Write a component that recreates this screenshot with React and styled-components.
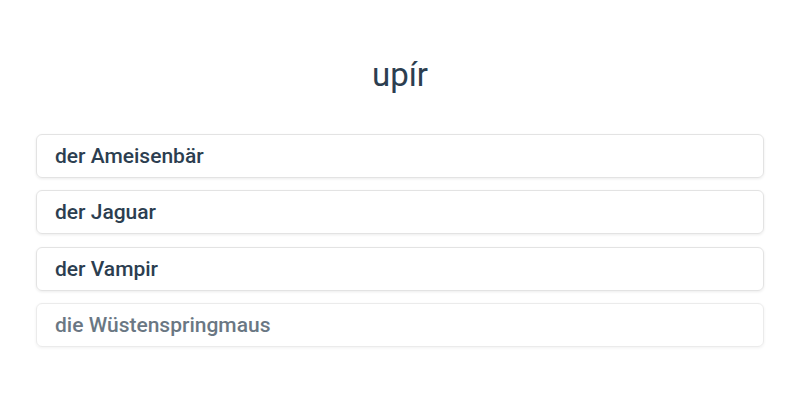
import React from "react";
import { styled, createGlobalStyle } from "styled-components";

const GlobalStyle = createGlobalStyle`
  body {
    margin: 0;
    background: #ffffff;
    font-family: Roboto, "Noto Sans", sans-serif;
    color: #2c3e50;
  }
`;

const options = [
  { id: 1, label: "der Ameisenbär" },
  { id: 2, label: "der Jaguar" },
  { id: 3, label: "der Vampir" },
  { id: 4, label: "die Wüstenspringmaus", faded: true },
];

const App = () => {
  return (
    <Page>
      <GlobalStyle />
      <Word>upír</Word>
      <OptionList>
        {options.map((item) => (
          <OptionCard key={item.id} $faded={item.faded}>
            {item.label}
          </OptionCard>
        ))}
      </OptionList>
    </Page>
  );
};

const Page = styled.div`
  width: 800px;
  height: 400px;
  padding: 52px 36px 0;
  box-sizing: border-box;
`;

const Word = styled.h1`
  margin: 0 0 36px;
  text-align: center;
  font-size: 33px;
  font-weight: 400;
  line-height: 46px;
`;

const OptionList = styled.div`
  display: flex;
  flex-direction: column;
  gap: 12.4px;
`;

const OptionCard = styled.div`
  height: 44px;
  box-sizing: border-box;
  display: flex;
  align-items: center;
  padding: 0 18px;
  border: 1px solid #e3e3e3;
  border-radius: 6px;
  box-shadow: 0 1px 3px rgba(0, 0, 0, 0.08);
  font-size: 21px;
  font-weight: 500;
  opacity: ${(p) => (p.$faded ? 0.7 : 1)};
`;

export default App;
